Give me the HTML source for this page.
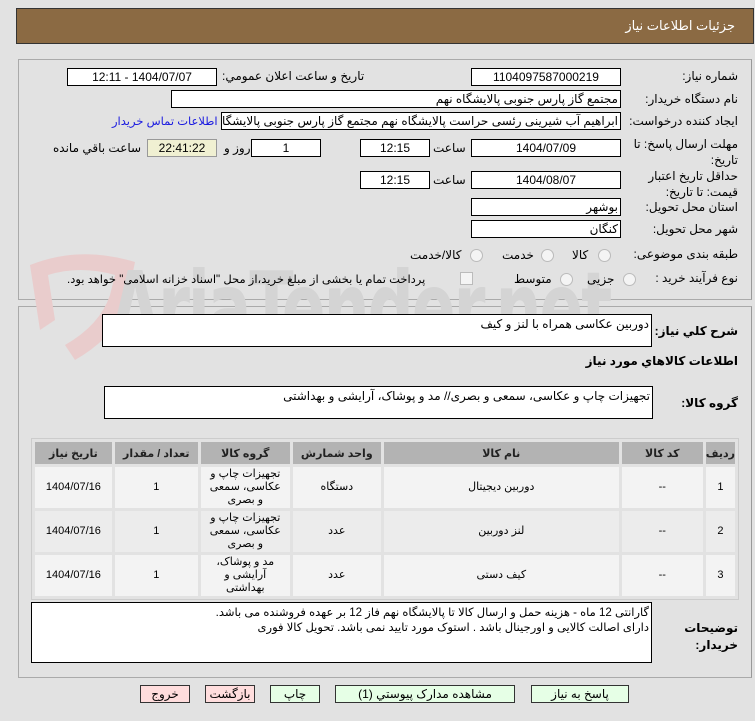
<!DOCTYPE html>
<html><head><meta charset="utf-8">
<style>
body{margin:0;width:755px;height:721px;background:#e2e2e2;font-family:"Liberation Sans","DejaVu Sans",sans-serif;font-size:12px;color:#000;position:relative;overflow:hidden;direction:rtl}
.a{position:absolute}
.hdr{left:16px;top:8px;width:736px;height:34px;background:#8b6a43;border:1px solid #333}
.hdr span{position:absolute;right:18px;top:9px;color:#fff;font-size:13px}
.pan{border:1px solid #aaa;border-right-color:#999}
.box{position:absolute;background:#fff;border:1px solid #000;box-sizing:border-box;height:18px;line-height:16px;font-size:12px;white-space:nowrap;overflow:hidden;padding:0 2px}
.c{text-align:center}
.lbl{position:absolute;right:17px;font-size:12px;white-space:nowrap}
.t{position:absolute;font-size:12px;white-space:nowrap}
.radio{position:absolute;width:11px;height:11px;border-radius:50%;border:1px solid #bbb;background:#f4f4f4}
.ta{position:absolute;background:#fff;border:1px solid #000;box-sizing:border-box;padding:4px 2px;font-size:12px}
table{position:absolute;left:31px;top:438px;width:708px;border-collapse:separate;border-spacing:3px;background:#e2e2e2;border:1px solid #ccc;font-size:11px}
th{background:#b3b3b3;height:22px;font-weight:bold;color:#222;padding:0}
td{background:#f3f3f3;text-align:center;padding:0;line-height:13px}
tr.r2 td{background:#ececec}
.btn{position:absolute;top:685px;height:18px;box-sizing:border-box;border:1px solid #333;background:#e6ffe6;text-align:center;font-size:12px;line-height:16px}
.red{background:#fdd}
.wm{left:110px;top:250px;font-size:100px;font-weight:bold;color:#d4d4d4;direction:ltr;letter-spacing:-3px;transform:scaleX(.72);transform-origin:left top;font-family:"DejaVu Sans Condensed","Liberation Sans",sans-serif}
</style></head><body>
<div class="a hdr"><span>جزئیات اطلاعات نیاز</span></div>
<div class="a pan" style="left:18px;top:59px;width:732px;height:239px"></div>
<div class="a pan" style="left:18px;top:306px;width:732px;height:370px"></div>
<svg class="a" style="left:20px;top:250px" width="130" height="110" viewBox="0 0 130 110"><path d="M10 15 Q60 -5 115 12 L105 60 Q90 90 55 110 L45 95 Q80 75 90 45 L95 25 Q60 15 28 25 L35 70 L20 80 Z" fill="#e9cccc"/></svg>
<div class="a wm">AriaTender.net</div>

<div class="lbl" style="top:69px">شماره نیاز:</div>
<div class="box c" style="left:471px;top:68px;width:150px">1104097587000219</div>
<div class="t" style="left:222px;top:69px">تاریخ و ساعت اعلان عمومي:</div>
<div class="box c" style="left:67px;top:68px;width:150px">1404/07/07 - 12:11</div>

<div class="lbl" style="top:92px">نام دستگاه خریدار:</div>
<div class="box" style="left:171px;top:90px;width:450px">مجتمع گاز پارس جنوبی  پالایشگاه نهم</div>

<div class="lbl" style="top:114px">ایجاد کننده درخواست:</div>
<div class="box" style="left:221px;top:112px;width:400px">ابراهیم آب شیرینی رئسی حراست پالایشگاه نهم مجتمع گاز پارس جنوبی  پالایشگاه</div>
<div class="t" style="left:112px;top:114px;color:#1a1ae0;font-size:11.5px">اطلاعات تماس خریدار</div>

<div class="lbl" style="top:136px;line-height:16px;text-align:right">مهلت ارسال پاسخ: تا<br>تاریخ:</div>
<div class="box c" style="left:471px;top:139px;width:150px">1404/07/09</div>
<div class="t" style="left:433px;top:141px">ساعت</div>
<div class="box c" style="left:360px;top:139px;width:70px">12:15</div>
<div class="box c" style="left:251px;top:139px;width:70px">1</div>
<div class="t" style="left:224px;top:141px">روز و</div>
<div class="box c" style="left:147px;top:139px;width:70px;background:#f0f0d2;border-color:#999">22:41:22</div>
<div class="t" style="left:53px;top:141px">ساعت باقي مانده</div>

<div class="lbl" style="top:168px;line-height:16px">حداقل تاریخ اعتبار<br>قیمت: تا تاریخ:</div>
<div class="box c" style="left:471px;top:171px;width:150px">1404/08/07</div>
<div class="t" style="left:433px;top:173px">ساعت</div>
<div class="box c" style="left:360px;top:171px;width:70px">12:15</div>

<div class="lbl" style="top:200px">استان محل تحویل:</div>
<div class="box" style="left:471px;top:198px;width:150px">بوشهر</div>
<div class="lbl" style="top:222px">شهر محل تحویل:</div>
<div class="box" style="left:471px;top:220px;width:150px">کنگان</div>

<div class="lbl" style="top:247px">طبقه بندی موضوعی:</div>
<div class="radio" style="left:598px;top:249px"></div><div class="t" style="left:572px;top:248px">کالا</div>
<div class="radio" style="left:541px;top:249px"></div><div class="t" style="left:502px;top:248px">خدمت</div>
<div class="radio" style="left:470px;top:249px"></div><div class="t" style="left:410px;top:248px">کالا/خدمت</div>

<div class="lbl" style="top:271px">نوع فرآیند خرید :</div>
<div class="radio" style="left:623px;top:273px"></div><div class="t" style="left:587px;top:272px">جزیی</div>
<div class="radio" style="left:560px;top:273px"></div><div class="t" style="left:514px;top:272px">متوسط</div>
<div class="a" style="left:460px;top:272px;width:11px;height:11px;border:1px solid #bbb;background:#f4f4f4"></div>
<div class="t" style="left:67px;top:272px;font-size:11.5px">پرداخت تمام یا بخشی از مبلغ خرید،از محل "اسناد خزانه اسلامی" خواهد بود.</div>

<div class="lbl" style="top:324px;font-weight:bold">شرح کلي نیاز:</div>
<div class="ta" style="left:102px;top:314px;width:550px;height:33px;padding-top:2px">دوربین عکاسی همراه با لنز و کیف</div>
<div class="lbl" style="top:354px;font-weight:bold">اطلاعات کالاهاي مورد نیاز</div>
<div class="lbl" style="top:396px;font-weight:bold">گروه کالا:</div>
<div class="ta" style="left:104px;top:386px;width:549px;height:33px;padding-top:2px">تجهیزات چاپ و عکاسی، سمعی و بصری// مد و پوشاک، آرایشی و بهداشتی</div>

<table>
<tr><th style="width:27px">ردیف</th><th style="width:81px">کد کالا</th><th style="width:235px">نام کالا</th><th style="width:88px">واحد شمارش</th><th style="width:89px">گروه کالا</th><th style="width:83px">تعداد / مقدار</th><th>تاریخ نیاز</th></tr>
<tr style="height:41px"><td>1</td><td>--</td><td>دوربین دیجیتال</td><td>دستگاه</td><td>تجهیزات چاپ و<br>عکاسی، سمعی<br>و بصری</td><td>1</td><td>1404/07/16</td></tr>
<tr class="r2" style="height:41px"><td>2</td><td>--</td><td>لنز دوربین</td><td>عدد</td><td>تجهیزات چاپ و<br>عکاسی، سمعی<br>و بصری</td><td>1</td><td>1404/07/16</td></tr>
<tr style="height:41px"><td>3</td><td>--</td><td>کیف دستی</td><td>عدد</td><td>مد و پوشاک،<br>آرایشی و<br>بهداشتی</td><td>1</td><td>1404/07/16</td></tr>
</table>

<div class="lbl" style="top:620px;font-weight:bold;line-height:17px">توضیحات<br>خریدار:</div>
<div class="ta" style="left:31px;top:602px;width:621px;height:61px;padding-top:3px;line-height:15px;font-size:11.5px">گارانتی 12 ماه - هزینه حمل و ارسال کالا تا پالایشگاه نهم فاز 12 بر عهده فروشنده می باشد.<br>دارای اصالت کالایی و اورجینال باشد . استوک مورد تایید نمی باشد. تحویل کالا فوری</div>

<div class="btn" style="left:531px;width:98px">پاسخ به نیاز</div>
<div class="btn" style="left:335px;width:180px">مشاهده مدارک پیوستي (1)</div>
<div class="btn" style="left:270px;width:50px">چاپ</div>
<div class="btn red" style="left:205px;width:50px">بازگشت</div>
<div class="btn red" style="left:140px;width:50px">خروج</div>
</body></html>
